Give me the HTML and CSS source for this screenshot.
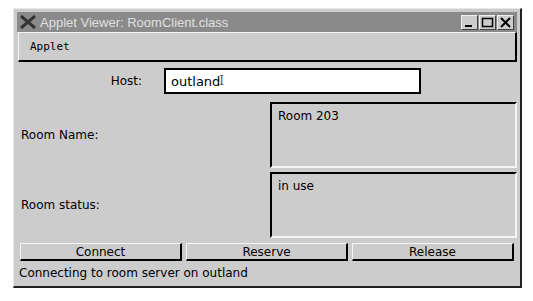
FILE: index.html
```html
<!DOCTYPE html>
<html lang="en">
  <head>
    <meta charset="UTF-8" />
    <title>Applet Viewer: RoomClient.class</title>
    <link rel="stylesheet" href="styles.css">
  </head>
  <body>
    <div class="window">
      <div class="title-bar">
        <svg class="wm-icon" width="16" height="14" viewBox="0 0 16 14">
          <path d="M1 1 L15 13 M15 1 L1 13" stroke="#333" stroke-width="3" fill="none" />
        </svg>
        <span class="title-text">Applet Viewer: RoomClient.class</span>
        <div class="wm-buttons">
          <span class="wm-btn">
            <svg width="15" height="13" viewBox="0 0 15 13"><rect x="3" y="9" width="7" height="2" fill="#000" /></svg>
          </span>
          <span class="wm-btn">
            <svg width="15" height="13" viewBox="0 0 15 13"><rect x="2.5" y="2.5" width="10" height="8" stroke="#000" stroke-width="1.5" fill="none" /></svg>
          </span>
          <span class="wm-btn">
            <svg width="15" height="13" viewBox="0 0 15 13"><path d="M3 2 L12 11 M12 2 L3 11" stroke="#000" stroke-width="2" fill="none" /></svg>
          </span>
        </div>
      </div>

      <div class="menu-bar">Applet</div>

      <main class="applet">
        <div class="host-row">
          <label class="host-label" for="hostField">Host:</label>
          <div class="text-field" id="hostField">outland<span class="caret">I</span></div>
        </div>

        <div class="field-row">
          <span class="field-label">Room Name:</span>
          <div class="text-area">Room 203</div>
        </div>

        <div class="field-row">
          <span class="field-label">Room status:</span>
          <div class="text-area">in use</div>
        </div>

        <div class="button-row">
          <button class="awt-button">Connect</button>
          <button class="awt-button">Reserve</button>
          <button class="awt-button">Release</button>
        </div>

        <div class="status-line">Connecting to room server on outland</div>
      </main>
    </div>
  </body>
</html>
```

FILE: styles.css
```css
body {
  margin: 0;
  background-color: #ffffff;
  font-family: "DejaVu Sans", Verdana, sans-serif;
  font-size: 12px;
  color: #000;
}

.window {
  margin: 8px 0 0 13px;
  width: 509px;
  height: 280px;
  box-sizing: border-box;
  background-color: #cccccc;
  border-top: 1px solid #e8e8e8;
  border-left: 1px solid #e8e8e8;
  border-right: 2px solid #222;
  border-bottom: 2px solid #222;
  padding: 3px 3px 3px 3px;
  display: flex;
  flex-direction: column;
}

.title-bar {
  height: 20px;
  background-color: #8a8a8a;
  display: flex;
  align-items: center;
  padding-left: 3px;
  font-family: "Liberation Sans", Arial, sans-serif;
  font-size: 13px;
  color: #e0e0e0;
}

.wm-icon {
  margin-right: 4px;
}

.title-text {
  flex: 1;
}

.wm-buttons {
  display: flex;
  gap: 1px;
  margin-right: 3px;
}

.wm-btn {
  width: 15px;
  height: 13px;
  background-color: #cccccc;
  border-top: 1px solid #f0f0f0;
  border-left: 1px solid #f0f0f0;
  border-right: 1px solid #444;
  border-bottom: 1px solid #444;
  display: flex;
}

.menu-bar {
  height: 30px;
  box-sizing: border-box;
  margin: 0 0 0 1px;
  border-top: 1px solid #f4f4f4;
  border-left: 1px solid #f4f4f4;
  border-right: 2px solid #000;
  border-bottom: 2px solid #000;
  padding-left: 11px;
  display: flex;
  align-items: center;
  font-family: "DejaVu Sans Mono", monospace;
  font-size: 11px;
}

.applet {
  flex: 1;
  display: flex;
  flex-direction: column;
  padding: 4px 0 0 2px;
}

.host-row {
  display: flex;
  align-items: center;
  height: 30px;
}

.host-label {
  width: 123px;
  text-align: right;
  margin-right: 22px;
}

.text-field {
  width: 257px;
  height: 26px;
  box-sizing: border-box;
  background-color: #fff;
  border: 2px solid #000;
  padding-left: 5px;
  display: flex;
  align-items: center;
  font-size: 13px;
}

.caret {
  font-family: "DejaVu Serif", serif;
  font-size: 12px;
  color: #555;
  margin-left: -1px;
}

.field-row {
  display: flex;
  align-items: center;
  margin-top: 6px;
  height: 66px;
}

.field-label {
  width: 249px;
  padding-left: 2px;
}

.text-area {
  width: 247px;
  height: 66px;
  box-sizing: border-box;
  border-top: 2px solid #000;
  border-left: 2px solid #000;
  border-right: 2px solid #f4f4f4;
  border-bottom: 2px solid #f4f4f4;
  padding: 5px 6px;
}

.field-row + .field-row {
  margin-top: 4px;
}

.button-row {
  display: flex;
  gap: 4px;
  margin: 5px 0 0 1px;
}

.awt-button {
  width: 162px;
  height: 18px;
  box-sizing: border-box;
  background-color: #cccccc;
  border-top: 1px solid #f4f4f4;
  border-left: 1px solid #f4f4f4;
  border-right: 2px solid #000;
  border-bottom: 2px solid #000;
  padding: 0;
  font-family: "DejaVu Sans", sans-serif;
  font-size: 12px;
}

.status-line {
  margin-top: 5px;
  font-size: 12px;
}
```
